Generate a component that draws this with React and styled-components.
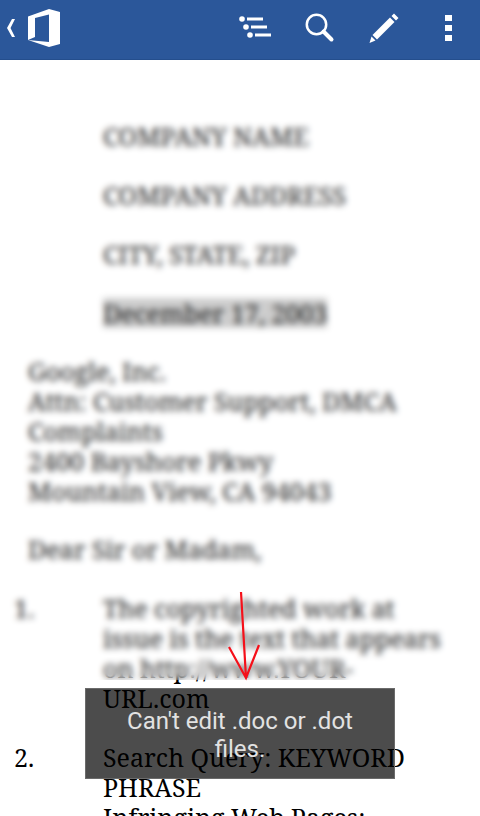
import React from "react";
import styled, { createGlobalStyle } from "styled-components";

const Global = createGlobalStyle`
  * { box-sizing: border-box; }
  body { margin: 0; background: #fff; }
`;

const Screen = styled.div`
  height: 100vh;
  display: flex;
  flex-direction: column;
  overflow: hidden;
  position: relative;
  background: #fff;
`;

const Toolbar = styled.header`
  flex: none;
  height: 60px;
  display: flex;
  align-items: flex-start;
  justify-content: space-between;
  background: #2b579a;
  border-bottom: 1px solid #244e8d;
`;

const Actions = styled.nav`
  display: flex;
`;

const ToolButton = styled.button`
  width: 64px;
  height: 56px;
  padding: 0;
  border: 0;
  background: none;
  display: flex;
  align-items: center;
  justify-content: center;
`;

const HomeButton = styled(ToolButton)`
  padding-left: 4px;
`;

const Document = styled.main`
  flex: 1;
  min-height: 0;
  overflow: hidden;
  position: relative;
  padding: 61px 14px 0;
  font-family: "Noto Serif", "Droid Serif", "Liberation Serif", serif;
  font-size: 25px;
  line-height: 30px;
  color: #000;
`;

const Sender = styled.section`
  display: flex;
  flex-direction: column;
  align-items: flex-start;
  gap: 29px;
  padding-left: 89px;
`;

const SenderLine = styled.p`
  margin: 0;
`;

const DateLine = styled.time`
  background: #c8c8c8;
`;

const Paragraph = styled.p`
  margin: 28px 0 0 14px;
  white-space: nowrap;
`;

const Items = styled.ol`
  list-style: none;
  margin: 0;
  padding: 0;
`;

const Item = styled.li`
  display: grid;
  grid-template-columns: 89px 1fr;
  margin-top: 29px;
  white-space: nowrap;
`;

const BlurVeil = styled.div`
  position: absolute;
  top: 0;
  left: 0;
  right: 0;
  height: 620px;
  background: rgba(255, 255, 255, 0.1);
  backdrop-filter: blur(3px);
`;

const Arrow = styled.svg`
  position: absolute;
  left: 226px;
  top: 590px;
`;

const Toast = styled.div`
  position: absolute;
  left: 50%;
  bottom: 37px;
  width: 310px;
  transform: translateX(-50%);
  padding: 18px 32px 15px;
  border: 1px solid #6b6b6b;
  background: rgba(0, 0, 0, 0.7);
  color: #e2e2e2;
  font-family: Roboto, sans-serif;
  font-size: 24px;
  line-height: 28px;
  text-align: center;
`;

export default function App() {
  return (
    <Screen>
      <Global />
      <Toolbar>
        <HomeButton aria-label="Back to Office">
          <svg width="60" height="48" viewBox="4 4 60 48" fill="#fff">
            <path d="M12 19h3l-4.500 9 4.500 9h-3l-5-9z" />
            <path d="M28 16.500 49 9l11 3v32l-11 3-21-7 21 2V14.500L35 18v19l-7 3z" />
          </svg>
        </HomeButton>
        <Actions>
          <ToolButton aria-label="Outline">
            <svg width="34" height="24" viewBox="1 1 34 24" fill="#fff">
              <circle cx="4" cy="4" r="2.800" />
              <circle cx="8" cy="12" r="2.800" />
              <circle cx="12" cy="20" r="2.800" />
              <path d="M9 2.500h16v3H9zM13 10.500h16v3H13zM17 18.500h16v3H17z" />
            </svg>
          </ToolButton>
          <ToolButton aria-label="Find">
            <svg width="30" height="30" viewBox="0 0 30 30" fill="none" stroke="#fff">
              <circle cx="11.500" cy="11.500" r="9.700" strokeWidth="2.500" />
              <path d="m18.500 18.500 8 8" strokeWidth="4" strokeLinecap="round" />
            </svg>
          </ToolButton>
          <ToolButton aria-label="Edit">
            <svg width="32" height="32" viewBox="0 0 32 32" fill="#fff">
              <path d="m26 1.500 4.500 4.500-2.500 2.500L23.500 4zM22 5.500l4.500 4.500L9 27.500 4.500 23zM3.500 24.500 7.500 28.500 1.500 31z" />
            </svg>
          </ToolButton>
          <ToolButton aria-label="More options">
            <svg width="7" height="28" viewBox="0 0 7 28" fill="#fff">
              <path d="M0 1h7v6H0zM0 11h7v6H0zM0 21h7v6H0z" />
            </svg>
          </ToolButton>
        </Actions>
      </Toolbar>
      <Document>
        <Sender>
          <SenderLine>COMPANY NAME</SenderLine>
          <SenderLine>COMPANY ADDRESS</SenderLine>
          <SenderLine>CITY, STATE, ZIP</SenderLine>
          <DateLine dateTime="2003-12-17">December 17, 2003</DateLine>
        </Sender>
        <Paragraph>
          Google, Inc.<br />
          Attn: Customer Support, DMCA<br />
          Complaints<br />
          2400 Bayshore Pkwy<br />
          Mountain View, CA 94043
        </Paragraph>
        <Paragraph>Dear Sir or Madam,</Paragraph>
        <Items>
          <Item>
            <span>1.</span>
            <span>
              The copyrighted work at<br />
              issue is the text that appears<br />
              on http://www.YOUR-<br />
              URL.com
            </span>
          </Item>
          <Item>
            <span>2.</span>
            <span>
              Search Query: KEYWORD<br />
              PHRASE<br />
              Infringing Web Pages:
            </span>
          </Item>
        </Items>
        <BlurVeil />
      </Document>
      <Toast role="status">Can't edit .doc or .dot files.</Toast>
      <Arrow width="36" height="92" viewBox="0 0 36 92" fill="none" stroke="#f5101a" strokeWidth="2.200" aria-hidden="true">
        <path d="M15 2 20 88M3 57l17 31 13-33" />
      </Arrow>
    </Screen>
  );
}
